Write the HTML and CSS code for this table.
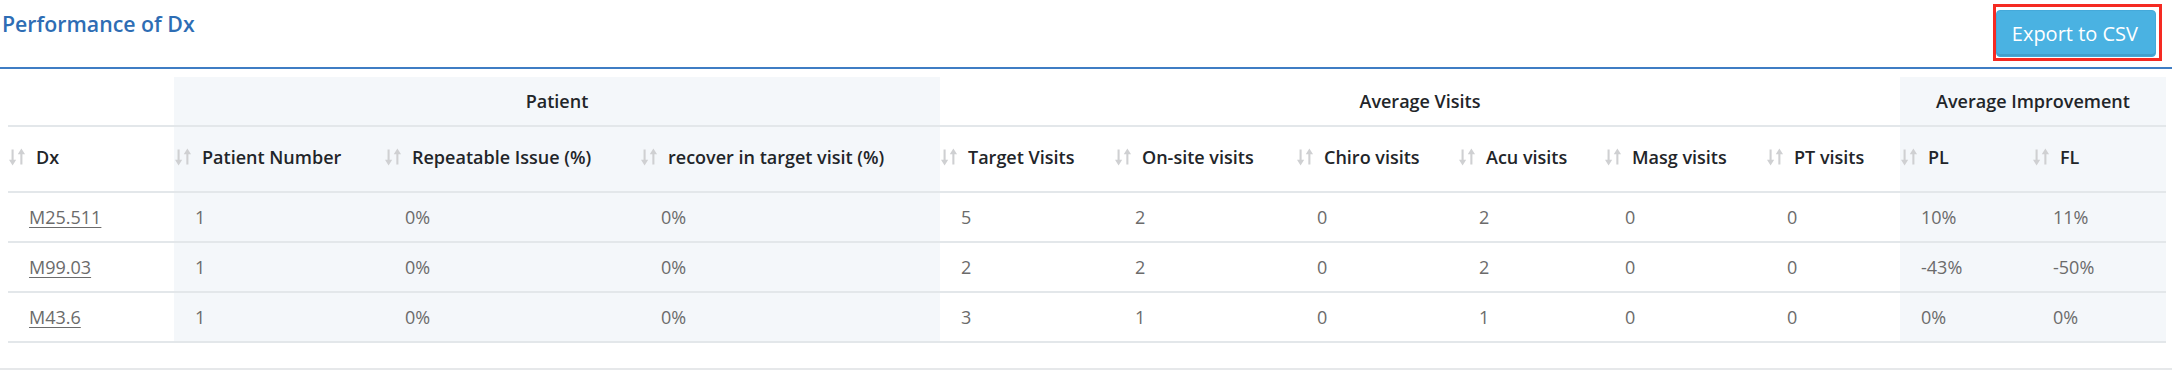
FILE: index.html
```html
<!DOCTYPE html>
<html>
<head>
<meta charset="utf-8">
<link rel="stylesheet" href="styles.css">
</head>
<body>
<div class="panel">
  <div class="panel-head">
    <h2 class="title">Performance of Dx</h2>
    <span class="highlight"><button class="btn-export">Export to CSV</button></span>
  </div>
  <table class="perf">
    <colgroup>
      <col style="width:166px"><col style="width:210px"><col style="width:256px"><col style="width:300px">
      <col style="width:174px"><col style="width:182px"><col style="width:162px"><col style="width:146px">
      <col style="width:162px"><col style="width:134px"><col style="width:132px"><col style="width:134px">
    </colgroup>
    <thead>
      <tr class="group-row">
        <th></th>
        <th colspan="3" class="shade">Patient</th>
        <th colspan="6">Average Visits</th>
        <th colspan="2" class="shade">Average Improvement</th>
      </tr>
      <tr class="col-row">
        <th><span class="sort"><svg class="sort-icon" viewBox="0 0 18 19"><path d="M2.7 1.5h2.2v11H7.6L3.8 18.5 0 12.5h2.7z"/><path d="M12 17.5h2.2v-11H17L13.1 0.5 9.3 6.5H12z"/></svg>Dx</span></th>
        <th><span class="sort"><svg class="sort-icon" viewBox="0 0 18 19"><path d="M2.7 1.5h2.2v11H7.6L3.8 18.5 0 12.5h2.7z"/><path d="M12 17.5h2.2v-11H17L13.1 0.5 9.3 6.5H12z"/></svg>Patient Number</span></th>
        <th><span class="sort"><svg class="sort-icon" viewBox="0 0 18 19"><path d="M2.7 1.5h2.2v11H7.6L3.8 18.5 0 12.5h2.7z"/><path d="M12 17.5h2.2v-11H17L13.1 0.5 9.3 6.5H12z"/></svg>Repeatable Issue (%)</span></th>
        <th><span class="sort"><svg class="sort-icon" viewBox="0 0 18 19"><path d="M2.7 1.5h2.2v11H7.6L3.8 18.5 0 12.5h2.7z"/><path d="M12 17.5h2.2v-11H17L13.1 0.5 9.3 6.5H12z"/></svg>recover in target visit (%)</span></th>
        <th><span class="sort"><svg class="sort-icon" viewBox="0 0 18 19"><path d="M2.7 1.5h2.2v11H7.6L3.8 18.5 0 12.5h2.7z"/><path d="M12 17.5h2.2v-11H17L13.1 0.5 9.3 6.5H12z"/></svg>Target Visits</span></th>
        <th><span class="sort"><svg class="sort-icon" viewBox="0 0 18 19"><path d="M2.7 1.5h2.2v11H7.6L3.8 18.5 0 12.5h2.7z"/><path d="M12 17.5h2.2v-11H17L13.1 0.5 9.3 6.5H12z"/></svg>On-site visits</span></th>
        <th><span class="sort"><svg class="sort-icon" viewBox="0 0 18 19"><path d="M2.7 1.5h2.2v11H7.6L3.8 18.5 0 12.5h2.7z"/><path d="M12 17.5h2.2v-11H17L13.1 0.5 9.3 6.5H12z"/></svg>Chiro visits</span></th>
        <th><span class="sort"><svg class="sort-icon" viewBox="0 0 18 19"><path d="M2.7 1.5h2.2v11H7.6L3.8 18.5 0 12.5h2.7z"/><path d="M12 17.5h2.2v-11H17L13.1 0.5 9.3 6.5H12z"/></svg>Acu visits</span></th>
        <th><span class="sort"><svg class="sort-icon" viewBox="0 0 18 19"><path d="M2.7 1.5h2.2v11H7.6L3.8 18.5 0 12.5h2.7z"/><path d="M12 17.5h2.2v-11H17L13.1 0.5 9.3 6.5H12z"/></svg>Masg visits</span></th>
        <th><span class="sort"><svg class="sort-icon" viewBox="0 0 18 19"><path d="M2.7 1.5h2.2v11H7.6L3.8 18.5 0 12.5h2.7z"/><path d="M12 17.5h2.2v-11H17L13.1 0.5 9.3 6.5H12z"/></svg>PT visits</span></th>
        <th><span class="sort"><svg class="sort-icon" viewBox="0 0 18 19"><path d="M2.7 1.5h2.2v11H7.6L3.8 18.5 0 12.5h2.7z"/><path d="M12 17.5h2.2v-11H17L13.1 0.5 9.3 6.5H12z"/></svg>PL</span></th>
        <th><span class="sort"><svg class="sort-icon" viewBox="0 0 18 19"><path d="M2.7 1.5h2.2v11H7.6L3.8 18.5 0 12.5h2.7z"/><path d="M12 17.5h2.2v-11H17L13.1 0.5 9.3 6.5H12z"/></svg>FL</span></th>
      </tr>
    </thead>
    <tbody>
      <tr>
        <td><a class="dx-link" href="#">M25.511</a></td>
        <td>1</td><td>0%</td><td>0%</td>
        <td>5</td><td>2</td><td>0</td><td>2</td><td>0</td><td>0</td>
        <td>10%</td><td>11%</td>
      </tr>
      <tr>
        <td><a class="dx-link" href="#">M99.03</a></td>
        <td>1</td><td>0%</td><td>0%</td>
        <td>2</td><td>2</td><td>0</td><td>2</td><td>0</td><td>0</td>
        <td>-43%</td><td>-50%</td>
      </tr>
      <tr>
        <td><a class="dx-link" href="#">M43.6</a></td>
        <td>1</td><td>0%</td><td>0%</td>
        <td>3</td><td>1</td><td>0</td><td>1</td><td>0</td><td>0</td>
        <td>0%</td><td>0%</td>
      </tr>
    </tbody>
  </table>
  <div class="panel-foot"></div>
</div>
</body>
</html>
```

FILE: styles.css
```css
* { box-sizing: border-box; }

html, body {
  margin: 0;
  padding: 0;
  background: #ffffff;
  font-family: "Open Sans", "Liberation Sans", sans-serif;
}

.panel {
  width: 2172px;
}

.panel-head {
  display: flex;
  justify-content: space-between;
  align-items: flex-start;
  height: 69px;
  border-bottom: 2px solid #3f7dc4;
}

.title {
  margin: 0;
  padding: 10px 0 0 2px;
  font-size: 21.3px;
  line-height: 28px;
  font-weight: 600;
  color: #2e6db4;
}

.highlight {
  display: block;
  margin: 4px 10px 0 0;
  padding: 3px 3px 1px 0;
  border: 3px solid #f52a22;
}

.btn-export {
  display: block;
  height: 47px;
  padding: 0 17px 0 15px;
  border: 1px solid #44a9da;
  border-radius: 4px;
  background: #4ab2e2;
  box-shadow: inset 0 -2px 0 rgba(0, 0, 0, 0.1);
  color: #ffffff;
  font-family: "Open Sans", "Liberation Sans", sans-serif;
  font-size: 20px;
  line-height: 1;
}

.perf {
  margin: 8px 0 0 8px;
  width: 2158px;
  table-layout: fixed;
  border-collapse: separate;
  border-spacing: 0;
}

.perf th,
.perf td {
  padding: 0;
  border-bottom: 2px solid #e3e7ea;
  text-align: left;
  vertical-align: middle;
  white-space: nowrap;
}

.group-row th {
  height: 50px;
  text-align: center;
  font-size: 18px;
  font-weight: 600;
  color: #222529;
}

.shade {
  background: #f4f7fa;
}

.col-row th {
  height: 66px;
  padding-left: 1px;
  font-size: 18px;
  font-weight: 600;
  color: #222529;
}

.col-row th:nth-child(2),
.col-row th:nth-child(3),
.col-row th:nth-child(4),
.col-row th:nth-child(11),
.col-row th:nth-child(12),
.perf td:nth-child(2),
.perf td:nth-child(3),
.perf td:nth-child(4),
.perf td:nth-child(11),
.perf td:nth-child(12) {
  background: #f4f7fa;
}

.sort {
  display: inline-flex;
  align-items: center;
  gap: 10px;
  position: relative;
  top: -1px;
}

.sort-icon {
  width: 17px;
  height: 18px;
  fill: #cfd0d2;
  flex: none;
}

.perf td {
  height: 50px;
  padding-left: 21px;
  font-size: 18px;
  color: #6b6b6b;
}

.dx-link {
  color: #6b6b6b;
  text-decoration: underline;
  text-underline-offset: 3px;
}

.panel-foot {
  margin-top: 25px;
  border-top: 2px solid #e6e8ea;
}
```
